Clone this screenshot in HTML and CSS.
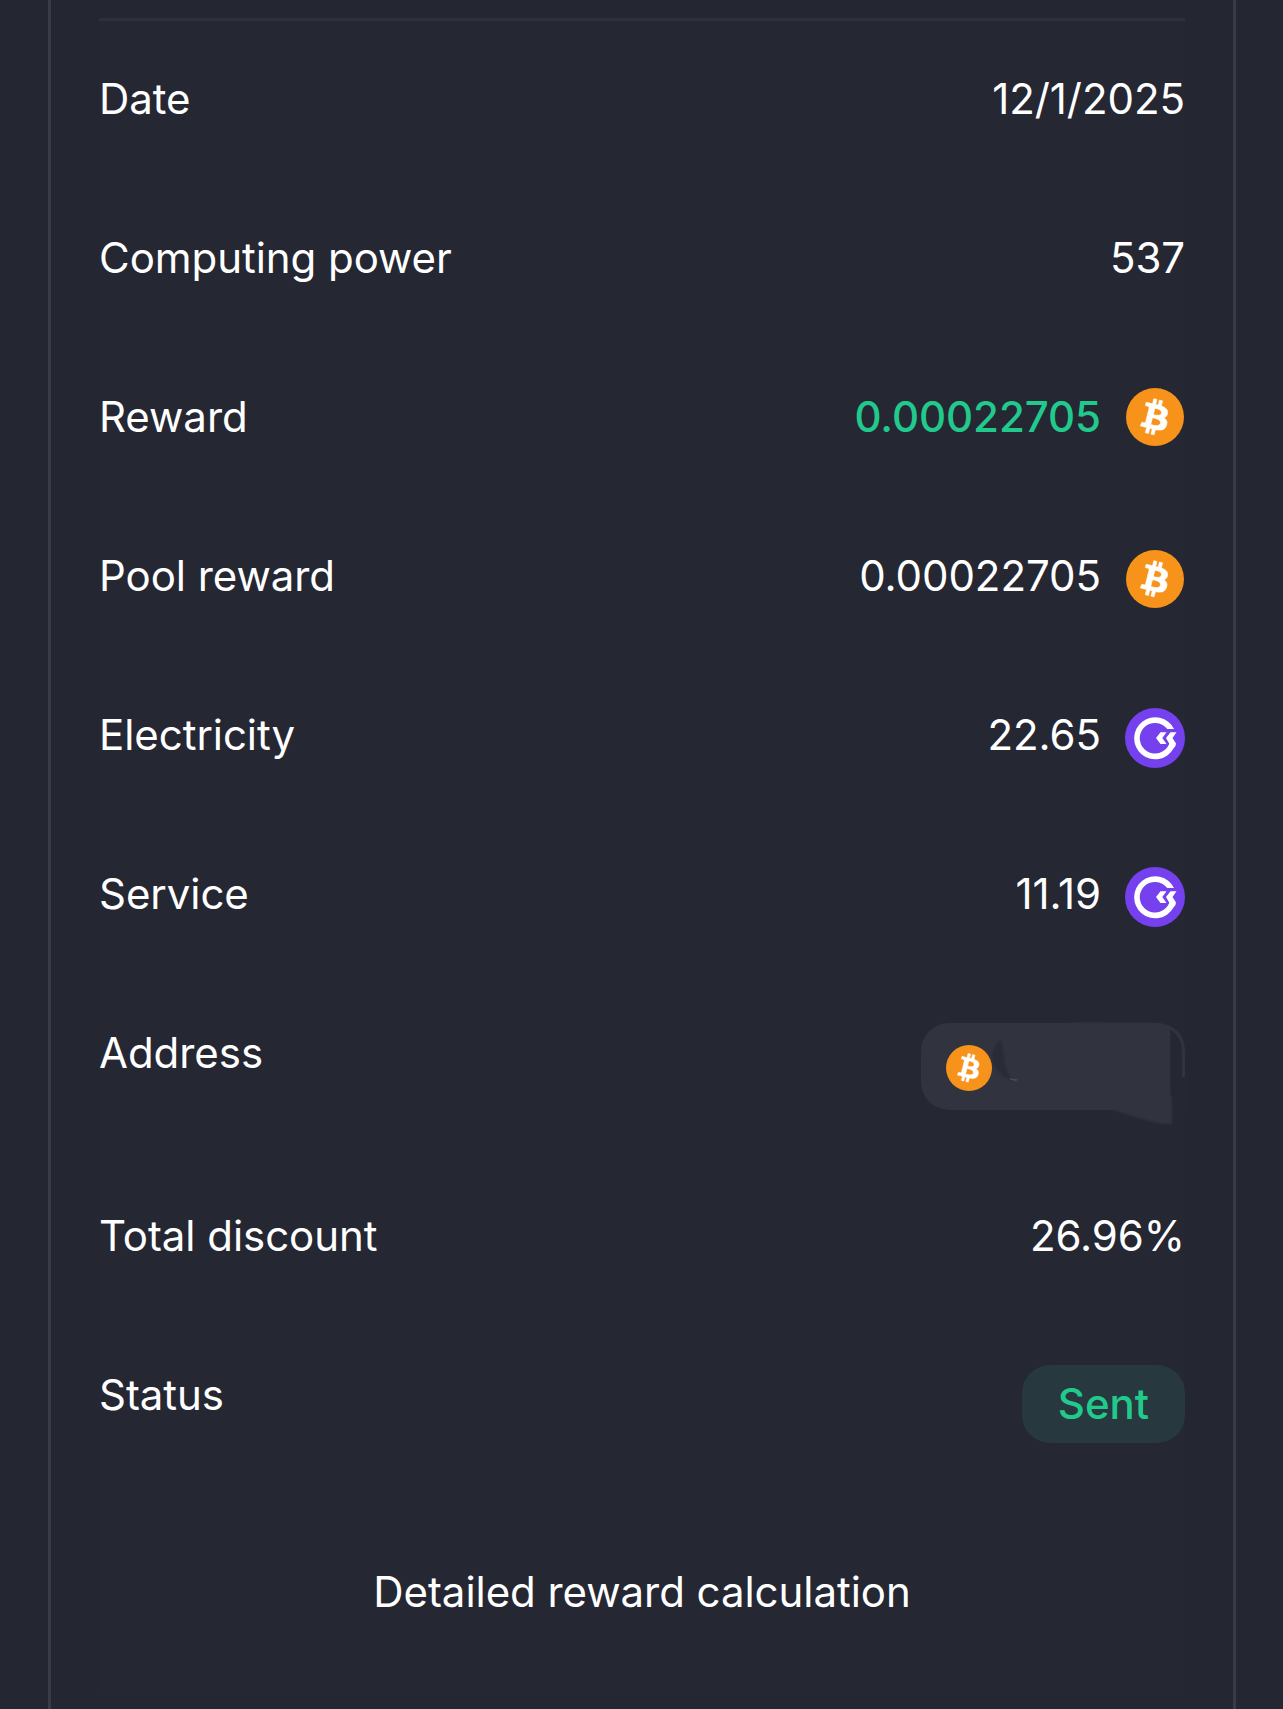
FILE: index.html
```html
<!DOCTYPE html>
<html lang="en">
<head>
    <meta charset="UTF-8">
    <meta name="viewport" content="width=device-width, initial-scale=1.0">
    <title>Reward details</title>
    <link rel="stylesheet" href="styles.css">
</head>
<body>
    <!-- Shared coin icons -->
    <svg class="sprite" width="0" height="0">
        <symbol id="btc" viewBox="0 0 32 32">
            <circle cx="16" cy="16" r="16" fill="#f7931a"/>
            <path transform="translate(-.25 -.1)" fill="#fff" stroke="#fff" stroke-width=".35" d="M23.189 14.02c.314-2.096-1.283-3.223-3.465-3.975l.708-2.84-1.728-.43-.69 2.765c-.454-.114-.92-.22-1.385-.326l.695-2.783L15.596 6l-.708 2.839c-.376-.086-.746-.17-1.104-.26l.002-.009-2.384-.595-.46 1.846s1.283.294 1.256.312c.7.175.826.638.805 1.006l-.806 3.235c.048.012.11.03.18.057l-.183-.045-1.13 4.532c-.086.212-.303.531-.793.41.018.025-1.256-.313-1.256-.313l-.858 1.978 2.25.561c.418.105.828.215 1.231.318l-.715 2.872 1.727.43.708-2.84c.472.127.93.245 1.378.357l-.706 2.828 1.728.43.715-2.866c2.948.558 5.164.333 6.097-2.333.752-2.146-.037-3.385-1.588-4.192 1.13-.26 1.98-1.003 2.207-2.538zm-3.95 5.538c-.533 2.147-4.148.986-5.32.695l.95-3.805c1.172.293 4.929.872 4.37 3.11zm.535-5.569c-.487 1.953-3.495.96-4.47.717l.86-3.45c.975.243 4.118.696 3.61 2.733z"/>
        </symbol>
        <symbol id="gmt" viewBox="0 0 60 60">
            <circle cx="30" cy="30" r="30" fill="#7540ee"/>
            <path fill="#fff" d="M49 21A21 21 0 1 0 48.500 40.500Q51 38.500 51 35.500L47.500 30L51.500 24.300H45.500L41 30L44.300 35.800A15.300 15.300 0 1 1 42.300 21Z"/>
            <path fill="#fff" d="M35.500 24.300H41.500L37.300 30L41.500 36H35.500L31 30Z"/>
        </symbol>
    </svg>

    <div class="card">
        <div class="details">
            <div class="row">
                <span class="label">Date</span>
                <span class="value">12/1/2025</span>
            </div>
            <div class="row">
                <span class="label">Computing power</span>
                <span class="value">537</span>
            </div>
            <div class="row">
                <span class="label">Reward</span>
                <span class="value with-icon positive">0.00022705 <svg class="coin coin-top"><use href="#btc"/></svg></span>
            </div>
            <div class="row">
                <span class="label">Pool reward</span>
                <span class="value with-icon">0.00022705 <svg class="coin"><use href="#btc"/></svg></span>
            </div>
            <div class="row">
                <span class="label">Electricity</span>
                <span class="value with-icon">22.65 <svg class="coin coin-gmt"><use href="#gmt"/></svg></span>
            </div>
            <div class="row">
                <span class="label">Service</span>
                <span class="value with-icon">11.19 <svg class="coin coin-gmt"><use href="#gmt"/></svg></span>
            </div>
            <div class="row">
                <span class="label">Address</span>
                <div class="address">
                    <svg class="address-mask" viewBox="0 0 264 110">
                        <path fill="#252733" d="M249 4L266 18V90H249Z"/>
                        <path fill="none" stroke="#31333f" stroke-width="3" d="M236 1.500Q262.500 4 262.500 30V54"/>
                        <path class="soft" fill="#31333f" d="M150 0Q170 -2 190 0H236L249 9V70L251 74V101Q244 102 232 99Q208 93 190 86V40H150Z"/>
                        <path class="soft" fill="#292b36" d="M80 16Q73 22 71 34Q73 46 80 51Q86 56 91 57Q83 46 83 33Z"/>
                        <path fill="none" stroke="#5a5b66" stroke-width="1" d="M89 55.500Q92 57.500 96 57"/>
                    </svg>
                    <svg class="address-coin"><use href="#btc"/></svg>
                </div>
            </div>
            <div class="row">
                <span class="label">Total discount</span>
                <span class="value">26.96%</span>
            </div>
            <div class="row">
                <span class="label">Status</span>
                <span class="badge">Sent</span>
            </div>
            <div class="more">Detailed reward calculation</div>
        </div>
    </div>
</body>
</html>
```
FILE: styles.css
```css
* {
    box-sizing: border-box;
}

body {
    margin: 0;
    height: 1709px;
    overflow: hidden;
    background: #242631;
    color: #fff;
    font-family: 'Inter', sans-serif;
    font-size: 42px;
    line-height: 60px;
    letter-spacing: -0.05px;
}

.sprite {
    position: absolute;
}

.card {
    height: 100%;
    margin: 0 47px 0 48px;
    padding: 18px 48px 15px;
    border: solid #3a3b47;
    border-width: 0 3px;
}

.details {
    height: 100%;
    background: #252733;
    border-top: 3px solid #2f303c;
}

.row {
    display: flex;
    justify-content: space-between;
    align-items: flex-start;
    min-height: 159px;
    padding: 48px 0;
}

.value {
    display: flex;
    height: 63px;
}

.with-icon {
    gap: 25px;
}

.positive {
    color: #22c98c;
    font-weight: 500;
}

.coin {
    width: 58px;
    height: 58px;
    margin: 4px 1px 0 0;
}

.coin-top {
    margin-top: 1px;
}

.coin-gmt {
    width: 60px;
    height: 60px;
    margin: 3px 0 0 -1px;
}

.address {
    position: relative;
    display: flex;
    align-items: center;
    width: 264px;
    height: 87px;
    padding: 2px 0 0 25px;
    background: #31333f;
    border-radius: 28px;
}

.address-mask {
    position: absolute;
    top: 0;
    left: 0;
    width: 264px;
    height: 110px;
    overflow: visible;
}

.soft {
    filter: blur(1px);
}

.address-coin {
    position: relative;
    width: 46px;
    height: 46px;
}

.badge {
    height: 78px;
    padding: 0 36px;
    background: #27383e;
    border-radius: 28px;
    color: #22c98c;
    font-weight: 500;
    line-height: 77px;
}

.more {
    padding-top: 71px;
    text-align: center;
}
```
